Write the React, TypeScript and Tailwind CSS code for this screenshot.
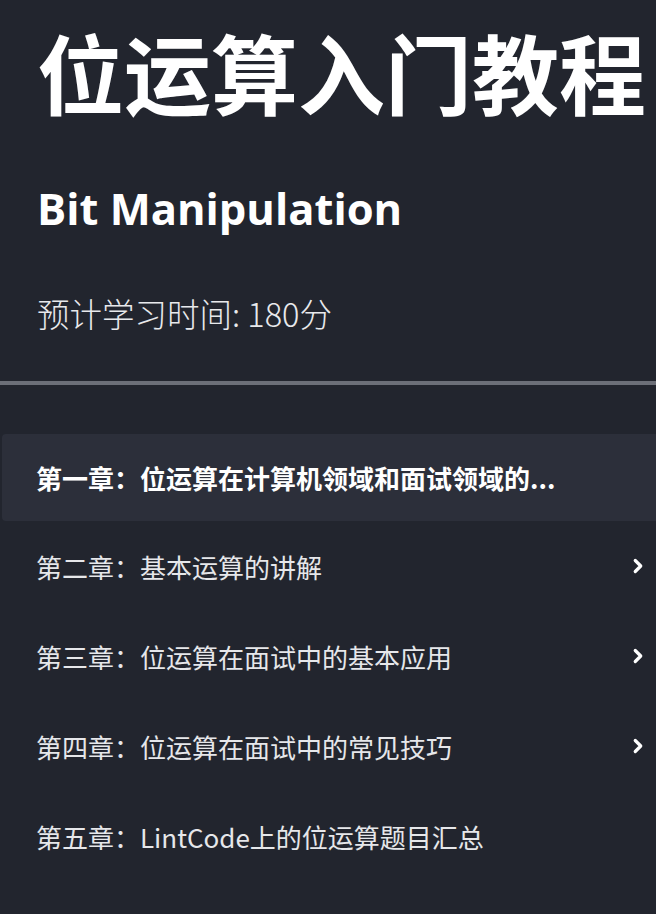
import React from 'react';
import { ChevronRight } from 'lucide-react';

interface Chapter {
  title: string;
  active?: boolean;
  arrow?: boolean;
}

const chapters: Chapter[] = [
  { title: '第一章：位运算在计算机领域和面试领域的...', active: true },
  { title: '第二章：基本运算的讲解', arrow: true },
  { title: '第三章：位运算在面试中的基本应用', arrow: true },
  { title: '第四章：位运算在面试中的常见技巧', arrow: true },
  { title: '第五章：LintCode上的位运算题目汇总' },
];

const cjk = "font-['Noto_Sans_CJK_SC','Noto_Sans',sans-serif]";

const App = () => {
  return (
    <div className={`min-h-[914px] w-full overflow-hidden bg-[#22252e] text-white ${cjk}`}>
      <div className="px-[37px] pt-[28px]">
        <h1 className="whitespace-nowrap text-[87px] font-semibold leading-none">
          位运算入门教程
        </h1>
        <h2 className="mt-[72px] font-['Open_Sans',sans-serif] text-[43.5px] font-bold leading-none">
          Bit Manipulation
        </h2>
        <p className="mt-[66px] text-[32.5px] font-light leading-none text-[#e8e9ec]">
          预计学习时间: 180分
        </p>
      </div>

      <div className="mt-[52px] h-[4px] bg-[#6c6f78]" />

      <ul className="mt-[49px] pl-[2px]">
        {chapters.map((c, i) => (
          <li
            key={i}
            className={`flex items-center justify-between pl-[34px] pr-[7px] text-[26px] ${
              c.active
                ? 'h-[87px] rounded-l-[4px] bg-[#2c2f3a] font-bold text-white'
                : 'h-[90px] text-[#e6e7ea]'
            }`}
          >
            <span className="whitespace-nowrap">{c.title}</span>
            {c.arrow && <ChevronRight className="h-[22px] w-[22px] text-white" strokeWidth={3.5} />}
          </li>
        ))}
      </ul>
    </div>
  );
};

export default App;
